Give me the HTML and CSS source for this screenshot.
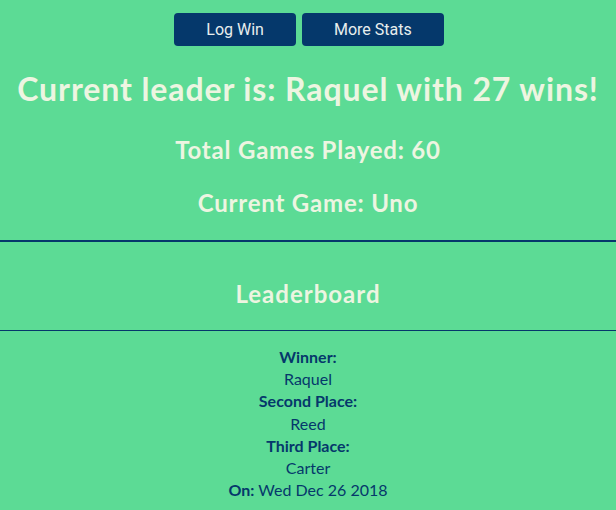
FILE: index.html
```html
<!DOCTYPE html>
<html>
<head>
<meta charset="utf-8">
<link rel="stylesheet" href="styles.css">
</head>
<body>
<div class="app">
  <div class="actions">
    <button class="btn">Log Win</button>
    <button class="btn">More Stats</button>
  </div>
  <h1 class="leader">Current leader is: Raquel with 27 wins!</h1>
  <h2 class="stat stat-total">Total Games Played: 60</h2>
  <h2 class="stat stat-game">Current Game: Uno</h2>
  <hr class="rule rule-thick">
  <h2 class="board-title">Leaderboard</h2>
  <hr class="rule rule-thin">
  <div class="results">
    <div class="label">Winner:</div>
    <div class="value">Raquel</div>
    <div class="label">Second Place:</div>
    <div class="value">Reed</div>
    <div class="label">Third Place:</div>
    <div class="value">Carter</div>
    <div class="value"><span class="label">On:</span> Wed Dec 26 2018</div>
  </div>
</div>
</body>
</html>
```

FILE: styles.css
```css
html, body {
  margin: 0;
  padding: 0;
  background: #5CDB95;
}
body {
  font-family: Lato, "Noto Sans", sans-serif;
  color: #EDF5E1;
  text-align: center;
}
.app {
  display: flex;
  flex-direction: column;
  align-items: stretch;
}
.actions {
  display: flex;
  justify-content: center;
  gap: 6px;
  padding-top: 13px;
  padding-left: 2px;
}
.btn {
  font-family: Roboto, sans-serif;
  font-size: 16px;
  height: 33px;
  padding: 0 32px;
  border: none;
  border-radius: 4px;
  background: #05386B;
  color: #E8EEEE;
}
.leader {
  font-size: 32px;
  font-weight: 700;
  line-height: 40px;
  letter-spacing: 0.9px;
  margin: 23px 0 0;
}
.stat {
  font-size: 24px;
  font-weight: 700;
  line-height: 30px;
  letter-spacing: 0.8px;
  margin: 0;
}
.stat-total { margin-top: 26px; }
.stat-game { margin-top: 23px; }
.rule {
  border: none;
  margin: 0;
  background: #05386B;
}
.rule-thick {
  height: 2px;
  margin-top: 22px;
}
.rule-thin {
  height: 1px;
}
.board-title {
  font-size: 24px;
  font-weight: 700;
  line-height: 30px;
  letter-spacing: 1px;
  margin: 37px 0 21px;
}
.results {
  padding-top: 15px;
  font-size: 16px;
  line-height: 22.2px;
  color: #05386B;
}
.label {
  font-weight: 700;
}
.value {
  font-weight: 400;
}
```
